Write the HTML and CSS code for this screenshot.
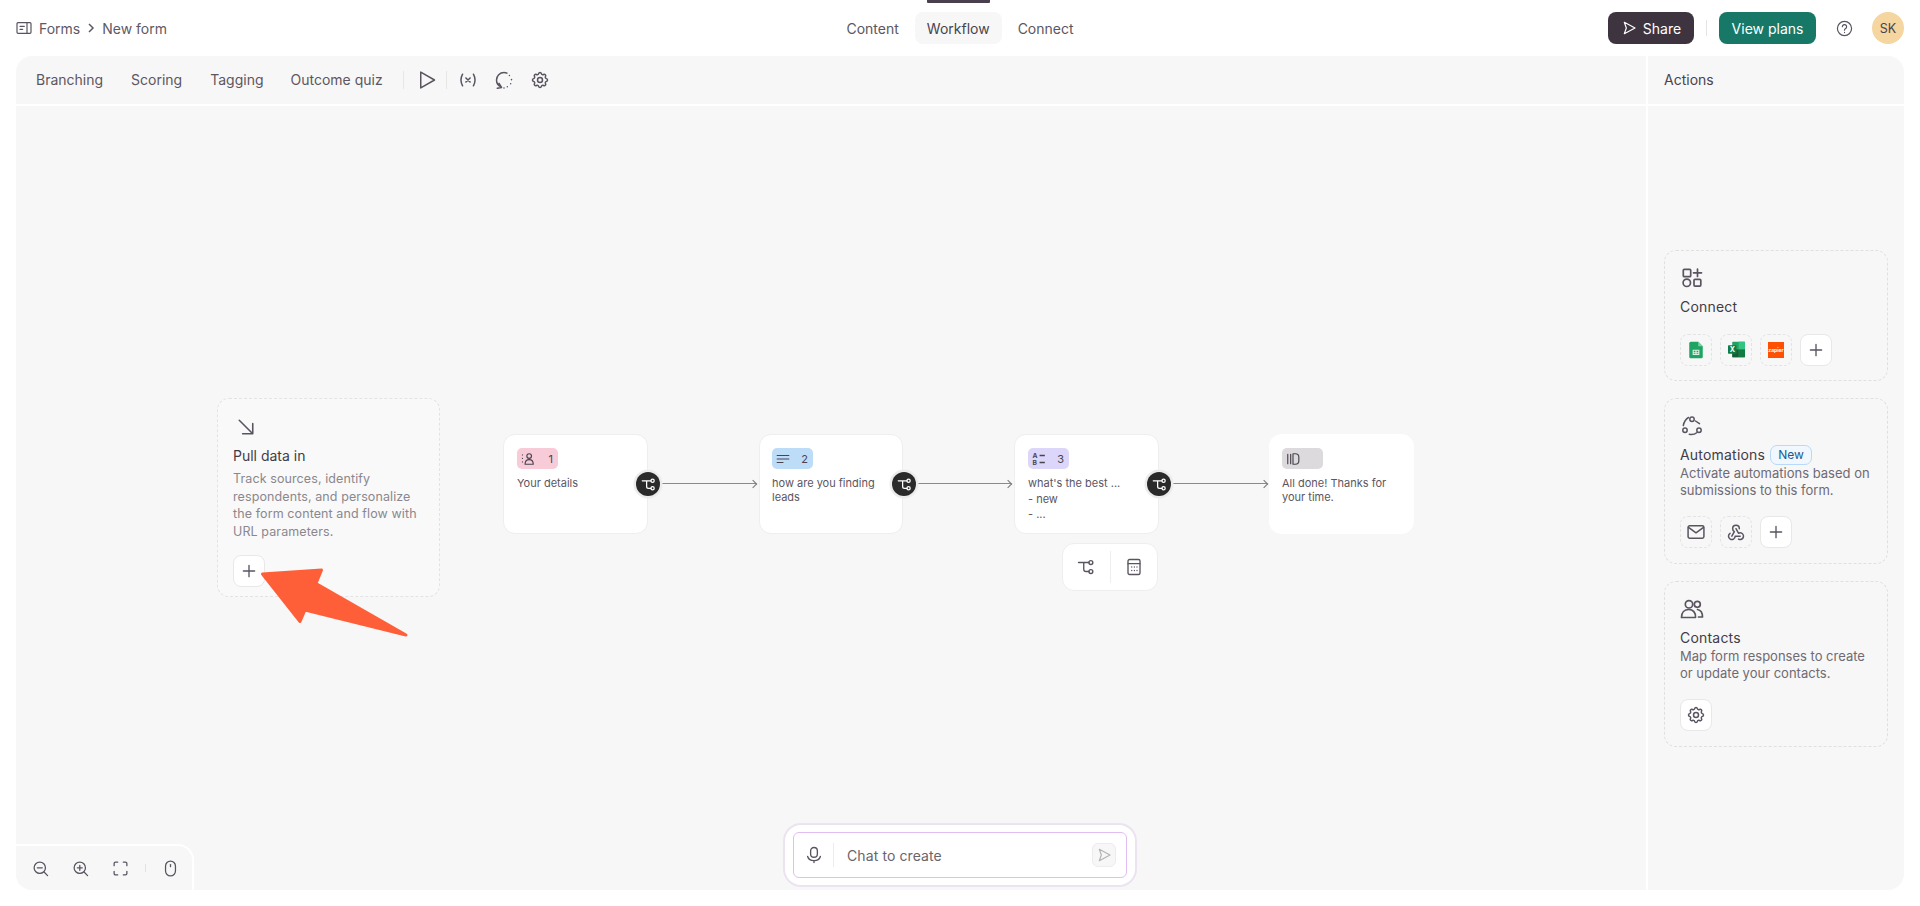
FILE: index.html
```html
<!DOCTYPE html>
<html lang="en">
<head>
<meta charset="utf-8">
<title>New form - Workflow</title>
<link rel="stylesheet" href="styles.css">
</head>
<body>
<svg class="defs" width="0" height="0" aria-hidden="true">
  <symbol id="i-branch" viewBox="0 0 24 24"><circle cx="18.500" cy="6" r="2.600"/><circle cx="18.500" cy="18" r="2.600"/><path d="M2 6h14M9 6v9a3 3 0 0 0 3 3h4"/></symbol>
  <symbol id="i-plus" viewBox="0 0 24 24"><path d="M12 4.500v15M4.500 12h15"/></symbol>
  <symbol id="i-gear" viewBox="0 0 24 24"><path d="M10.325 4.317c.426 -1.756 2.924 -1.756 3.35 0a1.724 1.724 0 0 0 2.573 1.066c1.543 -.94 3.31 .826 2.37 2.37a1.724 1.724 0 0 0 1.065 2.572c1.756 .426 1.756 2.924 0 3.35a1.724 1.724 0 0 0 -1.066 2.573c.94 1.543 -.826 3.31 -2.37 2.37a1.724 1.724 0 0 0 -2.572 1.065c-.426 1.756 -2.924 1.756 -3.35 0a1.724 1.724 0 0 0 -2.573 -1.066c-1.543 .94 -3.31 -.826 -2.37 -2.37a1.724 1.724 0 0 0 -1.065 -2.572c-1.756 -.426 -1.756 -2.924 0 -3.35a1.724 1.724 0 0 0 1.066 -2.573c-.94 -1.543 .826 -3.31 2.37 -2.37c1 .608 2.296 .07 2.572 -1.065z"/><circle cx="12" cy="12" r="3"/></symbol>
  <symbol id="i-send" viewBox="0 0 24 24"><path d="M5 3.500 21 12 5 20.500 8 12z"/></symbol>
</svg>

<header class="topbar">
  <nav class="crumbs">
    <svg class="icon icon-16" viewBox="0 0 24 24"><rect x="1.500" y="4" width="21" height="16" rx="1.500"/><path d="M16.500 4v16M6 9.500h6.500M6 14h4"/></svg>
    <span>Forms</span>
    <svg class="chev" viewBox="0 0 8 12"><path d="M2 2l4 4-4 4"/></svg>
    <span>New form</span>
  </nav>
  <nav class="tabs">
    <a class="tab">Content</a>
    <a class="tab tab-on">Workflow</a>
    <a class="tab">Connect</a>
  </nav>
  <div class="top-actions">
    <button class="btn btn-share"><svg class="icon icon-16 icon-white" viewBox="0 0 24 24"><use href="#i-send"/></svg>Share</button>
    <span class="vr"></span>
    <button class="btn btn-plans">View plans</button>
    <svg class="icon icon-help" viewBox="0 0 24 24"><circle cx="12" cy="12" r="10"/><path d="M9 9.500a3 3 0 1 1 4.500 2.600c-1 .6-1.500 1.200-1.500 2.400M12 17.500v.2"/></svg>
    <span class="avatar">SK</span>
  </div>
</header>

<main class="shell">
  <section class="work">
    <div class="toolbar">
      <a class="tool-link">Branching</a>
      <a class="tool-link">Scoring</a>
      <a class="tool-link tool-link-tag">Tagging</a>
      <a class="tool-link tool-link-last">Outcome quiz</a>
      <span class="tool-vr"></span>
      <svg class="icon icon-20 tool-play" viewBox="0 0 24 24"><path d="M4.500 2.500v19L21 12z"/></svg>
      <span class="tool-vr tool-vr-b"></span>
      <svg class="icon icon-20 tool-icon" viewBox="0 0 24 24"><path d="M5.500 5c-2.500 4.500-2.500 9.500 0 14M18.500 5c2.500 4.500 2.500 9.500 0 14M9.500 9.500l5 5M14.500 9.500l-5 5"/></svg>
      <svg class="icon icon-20 tool-icon" viewBox="0 0 24 24"><path d="M9 20.500C5 19 3 16 3 12a9 9 0 0 1 9-9c1.500 0 2.500.3 3.500.8M6 16l3 5-5 1M18.500 6.500v.1M21 11.500v.1M20 16.500v.1M16 20v.1M12 21.500v.1"/></svg>
      <svg class="icon icon-20 tool-gear" viewBox="0 0 24 24"><use href="#i-gear"/></svg>
    </div>

    <div class="canvas">
      <article class="pull">
        <svg class="icon icon-pull" viewBox="0 0 24 24"><path d="M3 3l17 17M21 7.500V21H7.500"/></svg>
        <h3 class="card-title">Pull data in</h3>
        <p class="pull-text">Track sources, identify respondents, and personalize the form content and flow with URL parameters.</p>
        <button class="sq sq-solid"><svg class="icon icon-18" viewBox="0 0 24 24"><use href="#i-plus"/></svg></button>
      </article>

      <article class="node n1">
        <span class="badge b-pink">
          <svg class="icon icon-14" viewBox="0 0 24 24"><circle cx="14" cy="7" r="4"/><path d="M7 21c0-5 3-8 7-8s7 3 7 8zM2.500 5v.1M2.500 11v.1M2.500 17v.1"/></svg>
          <b>1</b>
        </span>
        <p>Your details</p>
      </article>
      <article class="node n2">
        <span class="badge b-blue">
          <svg class="icon icon-14" viewBox="0 0 24 24"><path d="M2 6h20M2 12h20M2 18h10"/></svg>
          <b>2</b>
        </span>
        <p>how are you finding leads</p>
      </article>
      <article class="node n3">
        <span class="badge b-purple">
          <svg class="ab" viewBox="0 0 24 24"><text x="1" y="10.500">A</text><text x="1" y="22.500">B</text><path d="M13 6h9M13 18h9"/></svg>
          <b>3</b>
        </span>
        <p>what's the best ...</p>
        <p class="opt">- new</p>
        <p class="opt">- ...</p>
      </article>
      <article class="node n4">
        <span class="badge b-gray">
          <svg class="icon icon-14" viewBox="0 0 24 24"><path d="M3 4v16M8 4v16M12 3h4a6 6 0 0 1 6 6v6a6 6 0 0 1-6 6h-4z"/></svg>
        </span>
        <p>All done! Thanks for your time.</p>
      </article>

      <span class="wire w1"></span>
      <span class="wire w2"></span>
      <span class="wire w3"></span>
      <span class="port p1"><svg class="icon icon-port" viewBox="0 0 24 24"><use href="#i-branch"/></svg></span>
      <span class="port p2"><svg class="icon icon-port" viewBox="0 0 24 24"><use href="#i-branch"/></svg></span>
      <span class="port p3"><svg class="icon icon-port" viewBox="0 0 24 24"><use href="#i-branch"/></svg></span>

      <div class="mini">
        <span class="mini-cell"><svg class="icon icon-18" viewBox="0 0 24 24"><use href="#i-branch"/></svg></span>
        <span class="mini-cell"><svg class="icon icon-18" viewBox="0 0 24 24"><rect x="4" y="2" width="16" height="20" rx="2"/><path d="M4 7.500h16M9 12v.1M12.500 12v.1M16 12v.1M9 16.500v.1M12.500 16.500v.1M16 16.500v.1"/></svg></span>
      </div>

      <svg class="pointer" viewBox="0 0 150 80"><path d="M1.500 14 60.500 10 55 23.500 145 75 44 50 39 61.500z"/></svg>

      <div class="zoombar">
        <svg class="icon icon-17" viewBox="0 0 24 24"><circle cx="11" cy="11" r="8"/><path d="M7.500 11h7M17 17l5 5"/></svg>
        <svg class="icon icon-17" viewBox="0 0 24 24"><circle cx="11" cy="11" r="8"/><path d="M7.500 11h7M11 7.500v7M17 17l5 5"/></svg>
        <svg class="icon icon-17" viewBox="0 0 24 24"><path d="M3 8V5a2 2 0 0 1 2-2h3M16 3h3a2 2 0 0 1 2 2v3M21 16v3a2 2 0 0 1-2 2h-3M8 21H5a2 2 0 0 1-2-2v-3"/></svg>
        <span class="zoom-vr"></span>
        <svg class="icon icon-17" viewBox="0 0 24 24"><rect x="5" y="1.500" width="14" height="21" rx="7"/><path d="M12 6.500v3"/></svg>
      </div>

      <div class="chat">
        <div class="chat-inner">
          <svg class="icon icon-18" viewBox="0 0 24 24"><rect x="7.500" y="2" width="9" height="13" rx="4.500"/><path d="M3.500 14c1 3.500 4 5.500 8.500 5.500s7.500-2 8.500-5.500M12 19.500V22"/></svg>
          <span class="chat-vr"></span>
          <span class="chat-text">Chat to create</span>
          <span class="chat-send"><svg class="icon icon-16 icon-faint" viewBox="0 0 24 24"><use href="#i-send"/></svg></span>
        </div>
      </div>
    </div>
  </section>

  <aside class="side">
    <div class="side-head">Actions</div>
    <div class="side-body">
      <article class="act act-connect">
        <svg class="icon icon-act" viewBox="0 0 24 24"><rect x="3.300" y="3.300" width="7.400" height="7.400" rx="1"/><path d="M17.500 3v7.500M13.500 6.800h8"/><circle cx="6.800" cy="16.800" r="3.700"/><rect x="14" y="13.300" width="6.800" height="6.800" rx="1"/></svg>
        <h3 class="card-title">Connect</h3>
        <div class="sq-row">
          <span class="sq">
            <svg class="logo logo-sheet" viewBox="0 0 24 24"><path class="sheet-a" d="M5 1h10l6 6v14a2 2 0 0 1-2 2H5a2 2 0 0 1-2-2V3a2 2 0 0 1 2-2z"/><path class="sheet-b" d="M15 1l6 6h-6z"/><path class="sheet-c" d="M7.500 11.500h9v7h-9zM9 13v1.500h2.200V13zM12.800 13v1.500H15V13zM9 15.800v1.300h2.200v-1.300zM12.800 15.800v1.300H15v-1.300z"/></svg>
          </span>
          <span class="sq">
            <svg class="logo logo-xl" viewBox="0 0 24 24"><rect class="xl-a" x="6" y="1" width="18" height="22" rx="1"/><rect class="xl-b" x="15" y="1" width="9" height="11"/><rect class="xl-c" x="15" y="12" width="9" height="11"/><rect class="xl-d" x="6" y="12" width="9" height="11"/><rect class="xl-e" x="0" y="6" width="12" height="12" rx="1"/><text class="xl-x" x="6" y="15.500">X</text></svg>
          </span>
          <span class="sq"><span class="zapier">zapier</span></span>
          <button class="sq sq-solid"><svg class="icon icon-18" viewBox="0 0 24 24"><use href="#i-plus"/></svg></button>
        </div>
      </article>

      <article class="act">
        <svg class="icon icon-act icon-auto" viewBox="0 0 24 24"><circle cx="12" cy="5.300" r="2.200"/><circle cx="5" cy="16.300" r="2.200"/><circle cx="19" cy="16.300" r="2.200"/><path d="M8.500 3.500C6 5 4 8 3.300 11.500M15.500 7l4 2.700M9.300 20.300c3 .5 5.500 0 7.400-1.600"/></svg>
        <h3 class="card-title">Automations <span class="new">New</span></h3>
        <p class="act-text">Activate automations based on submissions to this form.</p>
        <div class="sq-row">
          <span class="sq"><svg class="icon icon-20" viewBox="0 0 24 24"><rect x="2.500" y="4.500" width="19" height="15" rx="2"/><path d="M3 6.500l9 6.500 9-6.500"/></svg></span>
          <span class="sq"><svg class="icon icon-20" viewBox="0 0 24 24"><path d="M4.876 13.61a4 4 0 1 0 6.124 3.39h6"/><path d="M15.066 20.502a4 4 0 1 0 1.934 -7.502c-.706 0 -1.424 .179 -2 .5l-3 -5.500"/><path d="M16 8a4 4 0 1 0 -8 0c0 1.506 .77 2.818 2 3.500l-3 5.500"/></svg></span>
          <button class="sq sq-solid"><svg class="icon icon-18" viewBox="0 0 24 24"><use href="#i-plus"/></svg></button>
        </div>
      </article>

      <article class="act">
        <svg class="icon icon-act" viewBox="0 0 24 24"><circle cx="9" cy="7.300" r="3.700"/><circle cx="17.300" cy="7.300" r="3"/><path d="M1.500 20.500c0-5 3-8 7.300-8s7 3 6.700 8zM17.500 12.500c3 .5 5 3.500 5 7.500H18.500"/></svg>
        <h3 class="card-title">Contacts</h3>
        <p class="act-text">Map form responses to create or update your contacts.</p>
        <div class="sq-row">
          <button class="sq sq-solid"><svg class="icon icon-20" viewBox="0 0 24 24"><use href="#i-gear"/></svg></button>
        </div>
      </article>
    </div>
  </aside>
</main>
</body>
</html>
```

FILE: styles.css
```css
* { box-sizing: border-box; }

html, body {
  margin: 0;
  height: 906px;
  overflow: hidden;
  background: #fff;
  color: #4a444e;
  font-family: Inter, "Liberation Sans", sans-serif;
  font-size: 14px;
}

.defs { position: absolute; }

p, h3 { margin: 0; }

.icon {
  display: block;
  flex: none;
  fill: none;
  stroke: #5a5460;
  stroke-width: 1.800;
  stroke-linecap: round;
  stroke-linejoin: round;
}
.icon-14 { width: 14px; height: 14px; }
.icon-16 { width: 16px; height: 16px; }
.icon-17 { width: 17px; height: 17px; }
.icon-18 { width: 18px; height: 18px; }
.icon-20 { width: 20px; height: 20px; }
.icon-white { stroke: #fff; }
.icon-faint { stroke: #b5b2b6; }

/* top bar */
.topbar {
  height: 56px;
  padding: 0 16px;
  display: grid;
  grid-template-columns: 1fr auto 1fr;
  align-items: center;
}
.crumbs { display: flex; align-items: center; color: #5f5964; }
.crumbs span:first-of-type { margin-left: 7px; }
.chev { width: 8px; height: 12px; margin: 0 7px; fill: none; stroke: #5f5964; stroke-width: 1.500; }

.tabs { display: flex; gap: 4px; }
.tab {
  position: relative;
  height: 32px;
  padding: 0 12px;
  display: flex;
  align-items: center;
  border-radius: 8px;
  color: #5c5660;
}
.tab-on { background: #f7f7f7; color: #4a444e; }
.tab-on::before {
  content: "";
  position: absolute;
  top: -12px;
  left: 12px;
  right: 12px;
  height: 3px;
  border-radius: 0 0 1px 1px;
  background: #4a3f4d;
}

.top-actions { display: flex; align-items: center; justify-content: flex-end; }
.btn {
  height: 32px;
  border: 0;
  border-radius: 8px;
  color: #fff;
  font: inherit;
  display: flex;
  align-items: center;
}
.btn-share { width: 86px; justify-content: center; gap: 6px; background: #3d3440; }
.btn-plans { width: 97px; justify-content: center; background: #177867; }
.vr { width: 1px; height: 16px; margin: 0 12px; background: #e4e4e4; }
.icon-help { width: 17px; height: 17px; margin: 0 19px 0 20px; stroke-width: 1.700; }
.avatar {
  width: 32px;
  height: 32px;
  border-radius: 50%;
  background: #f5d5a0;
  display: flex;
  align-items: center;
  justify-content: center;
  font-size: 12.500px;
  color: #4a444e;
}

/* shell */
.shell {
  height: 834px;
  margin: 0 16px;
  display: flex;
  gap: 2px;
  border-radius: 16px;
  overflow: hidden;
}
.work { flex: 1; display: flex; flex-direction: column; gap: 2px; min-width: 0; }

.toolbar {
  height: 48px;
  flex: none;
  padding: 0 0 2px 20px;
  display: flex;
  align-items: center;
  background: #f7f7f7;
  color: #5c5660;
}
.tool-link { margin-right: 28px; }
.tool-link-tag { margin-right: 27px; }
.tool-link-last { margin-right: 20px; }
.tool-vr { width: 1px; height: 18px; margin: 2px 13px 0 0; background: #e6e6e6; }
.tool-vr-b { margin: 2px 11px 0 9px; }
.tool-icon { margin: 2px 16px 0 0; }
.tool-play, .tool-gear { margin-top: 2px; }

.canvas { flex: 1; position: relative; background: #f7f7f7; }

/* pull card */
.pull {
  position: absolute;
  left: 201px;
  top: 292px;
  width: 223px;
  height: 199px;
  padding: 19px 15px 0;
  border: 1px dashed #e3e3e3;
  border-radius: 12px;
  background: #f9f9f9;
}
.icon-pull { width: 18px; height: 18px; margin-left: 4px; stroke-width: 2.100; }
.card-title {
  margin-top: 10px;
  font-size: 14px;
  line-height: 20px;
  font-weight: 400;
  color: #423c47;
  display: flex;
  align-items: center;
}
.pull-text {
  margin-top: 4px;
  font-size: 12.500px;
  line-height: 17.500px;
  color: #8b878e;
  letter-spacing: .1px;
}
.pull .sq { margin-top: 15px; }

/* square buttons */
.sq {
  width: 32px;
  height: 32px;
  padding: 0;
  flex: none;
  border: 1px dashed #e3e3e3;
  border-radius: 8px;
  background: transparent;
  display: flex;
  align-items: center;
  justify-content: center;
}
.sq-solid { border: 1px solid #e8e8e8; background: #fff; }
.sq-row { display: flex; gap: 8px; }

/* flow nodes */
.node {
  position: absolute;
  top: 328px;
  width: 144px;
  height: 100px;
  padding: 13px 13px 0;
  border: 1px solid #eeeeee;
  border-radius: 12px;
  background: #fff;
  font-size: 11px;
  line-height: 14px;
  color: #5c5660;
}
.n1 { left: 487px; width: 144.500px; }
.n2 { left: 743px; padding-left: 12px; }
.n3 { left: 998px; width: 145px; }
.n4 { left: 1253px; width: 145px; border-color: #fff; padding-left: 12px; }
.node p { margin-top: 7px; }
.node .opt { margin-top: 2px; }
.node .opt:last-child { margin-top: 1px; }

.badge {
  width: 41px;
  height: 21px;
  padding: 0 5px 0 4px;
  display: flex;
  align-items: center;
  justify-content: space-between;
  border-radius: 5px;
  font-size: 11px;
}
.badge b { font-weight: 400; color: #4a444e; }
.badge .icon { stroke-width: 2; stroke: #4a444e; }
.b-pink { background: #f7cbd8; }
.b-blue { background: #bddcf8; }
.b-purple { background: #dcd6fb; }
.b-gray { background: #dcdadd; }
.ab { width: 14px; height: 14px; fill: #4a444e; }
.ab text { font-family: Inter, sans-serif; font-size: 11.500px; font-weight: 700; stroke: none; }
.ab path { stroke: #4a444e; stroke-width: 2.200; fill: none; }

.wire {
  position: absolute;
  top: 377px;
  width: 98px;
  height: 1px;
  background: #8a8a8a;
}
.wire::after {
  content: "";
  position: absolute;
  right: 0;
  top: -2px;
  width: 5px;
  height: 5px;
  border-top: 1px solid #777;
  border-right: 1px solid #777;
  transform: rotate(45deg);
}
.w1 { left: 642px; }
.w2 { left: 897px; }
.w3 { left: 1153px; }

.port {
  position: absolute;
  top: 366px;
  width: 24px;
  height: 24px;
  border-radius: 50%;
  background: #2a2a2a;
  box-shadow: 0 0 0 2.500px #ececec;
  display: flex;
  align-items: center;
  justify-content: center;
}
.icon-port { width: 15px; height: 15px; stroke: #fff; stroke-width: 2; }
.p1 { left: 620px; }
.p2 { left: 876px; }
.p3 { left: 1131px; }

.mini {
  position: absolute;
  left: 1046px;
  top: 437px;
  width: 96px;
  height: 48px;
  display: flex;
  align-items: center;
  border: 1px solid #eeeeee;
  border-radius: 12px;
  background: #fff;
}
.mini-cell { flex: 1; display: flex; justify-content: center; }
.mini-cell + .mini-cell { border-left: 1px solid #eeeeee; height: 32px; align-items: center; }

.pointer {
  position: absolute;
  left: 245px;
  top: 454px;
  width: 150px;
  height: 80px;
  overflow: visible;
  fill: #ff5f38;
  stroke: #ff5f38;
  stroke-width: 3;
  stroke-linejoin: round;
}

/* zoom controls */
.zoombar {
  position: absolute;
  left: 0;
  bottom: 0;
  width: 178px;
  height: 46px;
  padding-left: 16px;
  display: flex;
  align-items: center;
  gap: 23px;
  background: #f7f7f7;
  border-top: 2px solid #fff;
  border-right: 2px solid #fff;
  border-top-right-radius: 16px;
}
.zoom-vr { width: 1px; height: 8px; margin: 0 -7px; background: #e2e2e2; }

/* chat */
.chat {
  position: absolute;
  left: 767px;
  top: 717px;
  width: 354px;
  height: 64px;
  padding: 7px 8px;
  border: 2px solid #ece3f1;
  border-radius: 18px;
  background: #fff;
}
.chat-inner {
  height: 100%;
  padding: 0 10px 0 11px;
  display: flex;
  align-items: center;
  border: 1px solid #e2bdf2;
  border-radius: 6px;
  background: #fff;
}
.chat-vr { width: 1px; height: 24px; margin: 0 13px 0 10px; background: #ececec; }
.chat-text { flex: 1; color: #6a646d; letter-spacing: .1px; }
.chat-send {
  width: 24px;
  height: 24px;
  display: flex;
  align-items: center;
  justify-content: center;
  border: 1px solid #ececec;
  border-radius: 6px;
  background: #f7f7f7;
}

/* side panel */
.side { width: 256px; flex: none; display: flex; flex-direction: column; gap: 2px; }
.side-head {
  height: 48px;
  flex: none;
  padding: 0 0 2px 16px;
  display: flex;
  align-items: center;
  background: #f7f7f7;
  color: #4a444e;
}
.side-body {
  flex: 1;
  padding: 0 16px;
  display: flex;
  flex-direction: column;
  justify-content: center;
  gap: 17px;
  background: #f7f7f7;
}
.act {
  height: 166px;
  padding: 15px 15px 0;
  border: 1px dashed #e0e0e0;
  border-radius: 12px;
}
.act-connect { height: 131px; }
.icon-act { width: 24px; height: 24px; stroke-width: 1.700; }
.icon-auto { stroke-width: 1.500; }
.act .card-title { margin-top: 7px; letter-spacing: .2px; }
.act-connect .sq-row { margin-top: 17px; }
.act-text {
  font-size: 13px;
  line-height: 17.500px;
  color: #6f6a73;
}
.act .act-text + .sq-row { margin-top: 16px; }

.new {
  margin-left: 5px;
  padding: 0 7px;
  height: 20px;
  display: inline-flex;
  align-items: center;
  border: 1px solid #b8daf8;
  border-radius: 7px;
  background: #f0f7fe;
  color: #1d5a90;
  font-size: 12px;
  letter-spacing: 0;
}

.logo { display: block; }
.logo-sheet { width: 18px; height: 18px; }
.logo-xl { width: 17px; height: 17px; }
.sheet-a { fill: #1fa463; }
.sheet-b { fill: #7fcfa8; }
.sheet-c { fill: #d9f0e3; fill-rule: evenodd; }
.xl-a { fill: #21a366; }
.xl-b { fill: #33c481; }
.xl-c { fill: #107c41; }
.xl-d { fill: #185c37; }
.xl-e { fill: #107c41; }
.xl-x { fill: #fff; font-family: Inter, sans-serif; font-size: 10px; font-weight: 700; text-anchor: middle; }
.zapier {
  width: 16px;
  height: 16px;
  display: flex;
  align-items: center;
  justify-content: center;
  background: #ff4f00;
  color: #fff;
  font-size: 5px;
  font-weight: 700;
}
```
